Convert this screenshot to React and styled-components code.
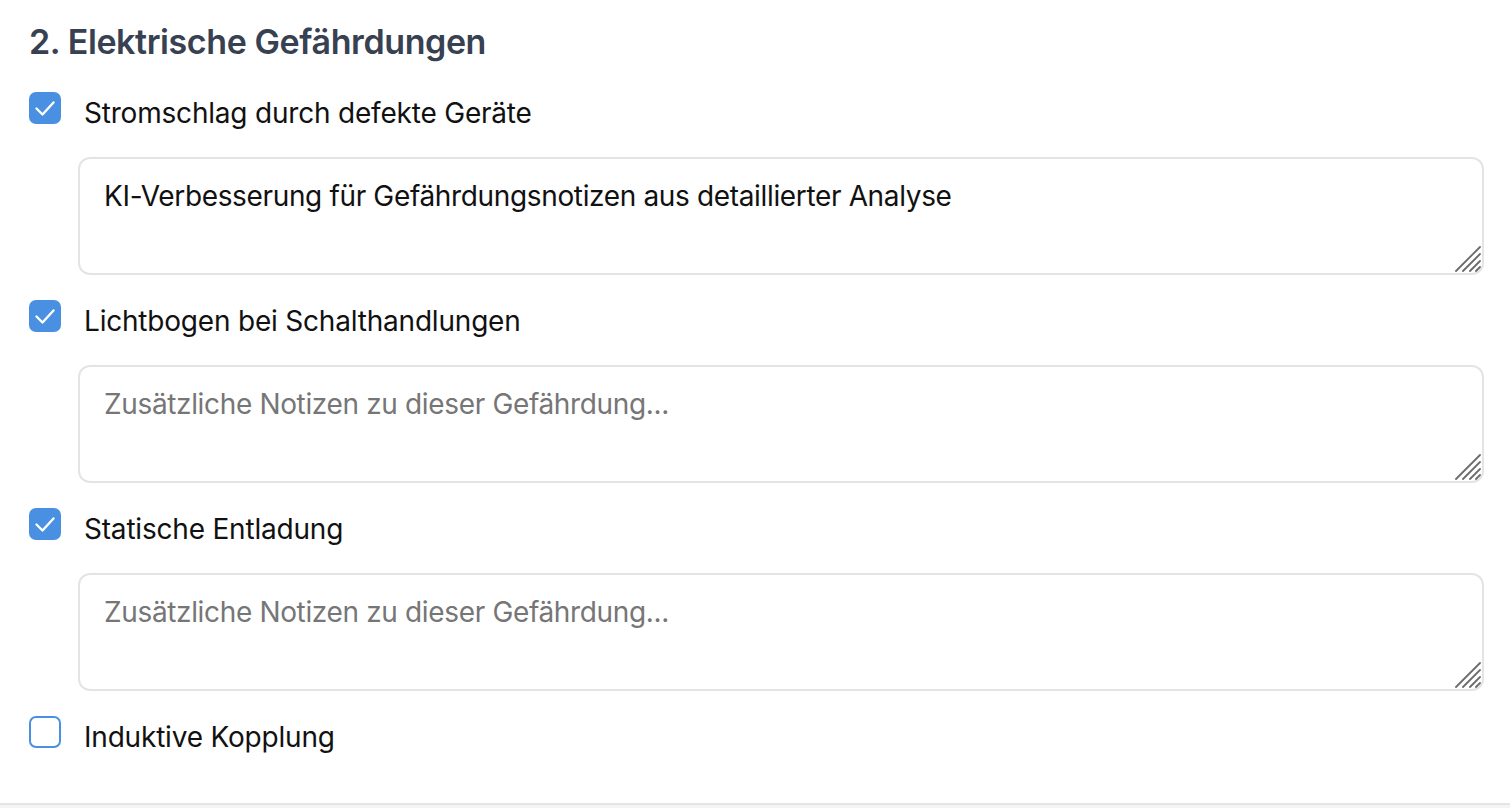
import React, { useState } from 'react';
import styled, { createGlobalStyle } from 'styled-components';

const GlobalStyle = createGlobalStyle`
  body {
    margin: 0;
    background-color: #f4f4f4;
    font-family: Inter, "Noto Sans", "Liberation Sans", sans-serif;
    color: #111;
  }
`;

const Section = styled.section`
  box-sizing: border-box;
  min-height: 805px;
  padding: 21px 26px 0 29px;
  background-color: #fff;
  border-bottom: 2px solid #e4e4e4;
`;

const Title = styled.h2`
  margin: 0 0 30px;
  font-size: 34px;
  line-height: 41px;
  font-weight: 600;
  color: #374151;
  letter-spacing: -0.4px;
`;

const List = styled.div`
  display: flex;
  flex-direction: column;
`;

const Item = styled.div`
  display: flex;
  flex-direction: column;
`;

const CheckRow = styled.label`
  display: flex;
  align-items: flex-start;
  gap: 23px;
  cursor: pointer;
`;

const Box = styled.span`
  box-sizing: border-box;
  flex: none;
  width: 32px;
  height: 32px;
  border-radius: 7px;
  border: 2px solid #4a90e2;
  background-color: ${(p) => (p.$checked ? '#4a90e2' : '#fff')};
  display: flex;
  align-items: center;
  justify-content: center;

  svg {
    flex: none;
  }
`;

const LabelText = styled.span`
  margin-top: 5px;
  font-size: 28px;
  line-height: 32px;
  letter-spacing: -0.2px;
  color: #111;
`;

const NoteWrap = styled.div`
  position: relative;
  margin: 28px 0 25px 49px;
`;

const Note = styled.textarea`
  display: block;
  box-sizing: border-box;
  width: 100%;
  height: 118px;
  padding: 20px 24px 18px;
  border: 2px solid #e4e4e4;
  border-radius: 12px;
  font-family: inherit;
  font-size: 28px;
  letter-spacing: -0.35px;
  color: #111;
  background: #fff;
  resize: none;
  outline: none;

  &::placeholder {
    color: #767676;
  }
`;

const Grip = styled.svg`
  position: absolute;
  right: 3px;
  bottom: 3px;
  pointer-events: none;
`;

const Check = () => (
  <svg width="28" height="28" viewBox="0 0 28 28" fill="none">
    <path d="M5.5 14.5l6 6L22.5 8.5" stroke="#fff" strokeWidth="2.4" strokeLinecap="round" strokeLinejoin="round" />
  </svg>
);

const ResizeGrip = () => (
  <Grip width="26" height="26" viewBox="0 0 26 26">
    <g stroke="#6b6b6b" strokeWidth="1.8" strokeLinecap="round">
      <path d="M1 25L25 1" />
      <path d="M8 25L25 8" />
      <path d="M15 25L25 15" />
      <path d="M21 25L25 21" />
    </g>
  </Grip>
);

const hazards = [
  { id: 1, label: 'Stromschlag durch defekte Geräte', checked: true, note: 'KI-Verbesserung für Gefährdungsnotizen aus detaillierter Analyse' },
  { id: 2, label: 'Lichtbogen bei Schalthandlungen', checked: true, note: '' },
  { id: 3, label: 'Statische Entladung', checked: true, note: '' },
  { id: 4, label: 'Induktive Kopplung', checked: false, note: '' },
];

const App = () => {
  const [items, setItems] = useState(hazards);

  const toggle = (id) =>
    setItems((prev) => prev.map((h) => (h.id === id ? { ...h, checked: !h.checked } : h)));

  const setNote = (id, note) =>
    setItems((prev) => prev.map((h) => (h.id === id ? { ...h, note } : h)));

  return (
    <>
      <GlobalStyle />
      <Section>
        <Title>2. Elektrische Gefährdungen</Title>
        <List>
          {items.map(({ id, label, checked, note }) => (
            <Item key={id}>
              <CheckRow onClick={() => toggle(id)}>
                <Box $checked={checked}>{checked && <Check />}</Box>
                <LabelText>{label}</LabelText>
              </CheckRow>
              {checked && (
                <NoteWrap>
                  <Note
                    value={note}
                    placeholder="Zusätzliche Notizen zu dieser Gefährdung..."
                    onChange={(e) => setNote(id, e.target.value)}
                  />
                  <ResizeGrip />
                </NoteWrap>
              )}
            </Item>
          ))}
        </List>
      </Section>
    </>
  );
};

export default App;
